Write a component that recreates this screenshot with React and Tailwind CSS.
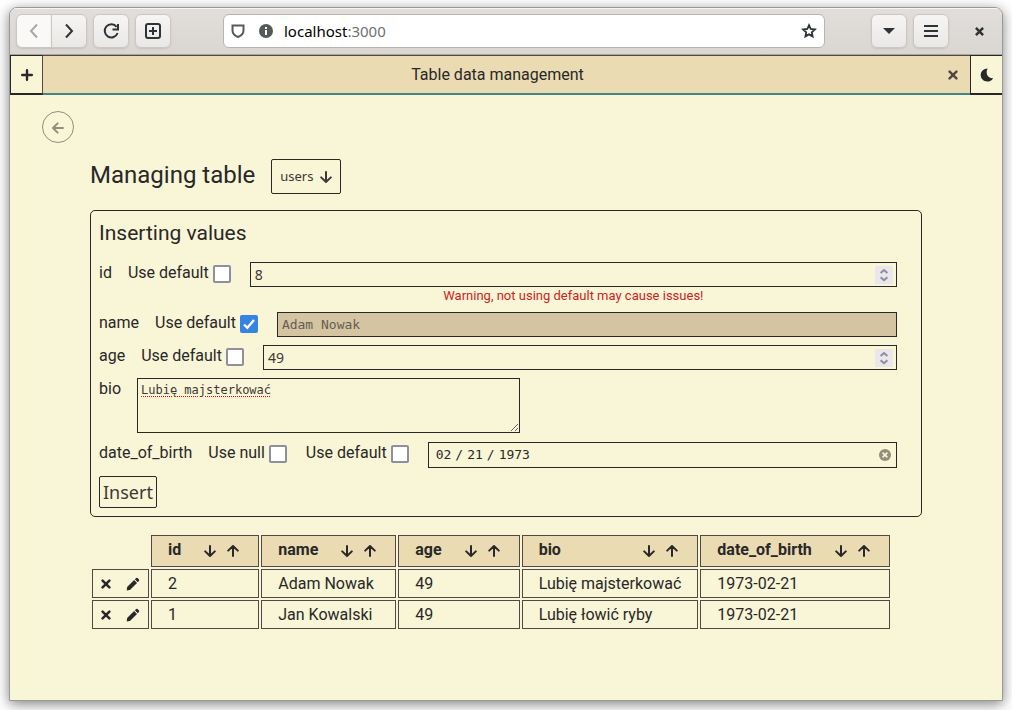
import React, { useState } from "react";

function Icon({ size = 16, box = 16, className = "", children }) {
  return (
    <svg
      width={size}
      height={size}
      viewBox={`0 0 ${box} ${box}`}
      fill="none"
      stroke="currentColor"
      strokeWidth="2"
      strokeLinecap="round"
      strokeLinejoin="round"
      aria-hidden="true"
      className={`block shrink-0 ${className}`}
    >
      {children}
    </svg>
  );
}

const ArrowDown = () => (
  <Icon size={12} box={12}>
    <path d="M6 1V11M1.2 6.4L6 11L10.8 6.4" />
  </Icon>
);

const ArrowUp = () => (
  <Icon size={12} box={12}>
    <path d="M6 11V1M1.2 5.6L6 1L10.8 5.6" />
  </Icon>
);

const Cross = () => (
  <Icon size={10} box={10}>
    <path strokeWidth="2.5" d="M1.6 1.6L8.4 8.4M8.4 1.6L1.6 8.4" />
  </Icon>
);

const Pencil = () => (
  <Icon size={14} box={15}>
    <path
      fill="currentColor"
      stroke="none"
      d="M.8 14.4L1.1 11.4Q1.2 10.7 1.7 10.2L8.7 3.2L11.8 6.3L4.8 13.3Q4.3 13.8 3.6 13.9L.8 14.4ZM9.5 2.4L10.8 1.2Q11.6 .4 12.4 1.1L13.9 2.6Q14.6 3.4 13.8 4.2L12.6 5.5Z"
    />
  </Icon>
);

function ToolbarButton({ label, className = "rounded-md", children }) {
  return (
    <button
      type="button"
      aria-label={label}
      className={`flex h-[34px] w-9 items-center justify-center border border-[#cdc7c2] bg-linear-to-b from-[#f6f5f4] to-[#eae8e6] text-[#2e3436] shadow-[0_1px_2px_rgba(0,0,0,0.1)] ${className}`}
    >
      {children}
    </button>
  );
}

function BrowserToolbar() {
  return (
    <header className="flex h-[47px] items-center border-b border-[#aaa49f] bg-linear-to-b from-[#e1dedb] to-[#dad6d2] pr-[9px] pl-1.5 shadow-[inset_0_1px_0_#f7f6f5]">
      <div className="flex gap-1.5">
        <div className="flex">
          <ToolbarButton label="Back" className="rounded-l-md bg-none bg-[#faf9f8] text-[#a5a9a9]">
            <Icon><path d="M11 1.5L5 8L11 14.5" strokeLinecap="butt" strokeLinejoin="miter" /></Icon>
          </ToolbarButton>
          <ToolbarButton label="Forward" className="-ml-px rounded-r-md">
            <Icon><path d="M5 1.5L11 8L5 14.5" strokeLinecap="butt" strokeLinejoin="miter" /></Icon>
          </ToolbarButton>
        </div>
        <ToolbarButton label="Reload">
          <Icon size={18} box={18}>
            <path d="M14.6 4.8A6.6 6.6 0 1 0 15.6 11" strokeLinecap="butt" />
            <path d="M16 2V7.5H10.5" strokeLinecap="butt" strokeLinejoin="miter" />
          </Icon>
        </ToolbarButton>
        <ToolbarButton label="New tab">
          <Icon>
            <rect x="1" y="1" width="14" height="14" rx="2" />
            <path d="M8 4V12M4 8H12" strokeLinecap="butt" />
          </Icon>
        </ToolbarButton>
      </div>
      <div className="mr-[46px] ml-[52px] flex h-[34px] min-w-0 flex-1 items-center rounded-md border border-[#b9b4af] bg-white px-[7px] text-[#555a5b]">
        <Icon size={14} box={14}>
          <path d="M1.5 1.5H12.5V6.5C12.5 10 10 11.8 7 13C4 11.8 1.5 10 1.5 6.5Z" strokeLinejoin="miter" />
        </Icon>
        <svg width="14" height="14" viewBox="0 0 14 14" className="ml-3.5 block shrink-0" aria-hidden="true">
          <circle cx="7" cy="7" r="7" fill="#555a5b" />
          <path d="M6 6H8V11H6ZM6 3H8V5H6Z" fill="#fff" />
        </svg>
        <p className="ml-[11px] flex-1 font-['Noto_Sans',sans-serif] text-[15px] leading-5 text-black">
          localhost<span className="text-[#6f6f6f]">:3000</span>
        </p>
        <button type="button" aria-label="Bookmark" className="text-[#2e3436]">
          <Icon>
            <path
              strokeLinejoin="miter"
              strokeWidth="1.8"
              d="M8 2.2L9.7 6L13.9 6.5L10.8 9.3L11.6 13.4L8 11.4L4.4 13.4L5.2 9.3L2.1 6.5L6.3 6Z"
            />
          </Icon>
        </button>
      </div>
      <div className="flex gap-1.5">
        <ToolbarButton label="List tabs">
          <Icon><path d="M2 5H14L8 11Z" fill="currentColor" stroke="none" /></Icon>
        </ToolbarButton>
        <ToolbarButton label="Menu">
          <Icon><path d="M1 3H15M1 8H15M1 13H15" strokeLinecap="butt" /></Icon>
        </ToolbarButton>
      </div>
      <button type="button" aria-label="Close window" className="ml-4 flex h-7 w-7 items-center justify-center text-[#2e3436]">
        <Icon size={9} box={8}>
          <path d="M.8 .8L7.2 7.2M7.2 .8L.8 7.2" strokeWidth="2.2" strokeLinecap="butt" />
        </Icon>
      </button>
    </header>
  );
}

function TabBar() {
  return (
    <nav className="flex h-10">
      <button
        type="button"
        aria-label="Add tab"
        className="flex w-[33px] items-center justify-center border border-b-2 border-[#282828] border-r-[#504945]"
      >
        <Icon size={12} box={12}><path d="M6 1.2V10.8M1.2 6H10.8" strokeWidth="2.4" /></Icon>
      </button>
      <div className="flex flex-1 items-center border-t border-b-2 border-t-[#504945] border-b-[#458588] bg-[#ebdbb2] px-2">
        <h1 className="flex-1 text-center text-base">Table data management</h1>
        <button type="button" aria-label="Close tab" className="flex h-[18px] w-[18px] items-center justify-center text-[#504945]">
          <Cross />
        </button>
      </div>
      <button
        type="button"
        aria-label="Toggle dark mode"
        className="flex w-8 items-center justify-center border-t border-b-2 border-l border-[#282828]"
      >
        <svg width="14" height="14" viewBox="0 0 14 14" className="block" aria-hidden="true">
          <path d="M7.6 .5C5.2 5 7.4 10.6 13.2 10.2C11.9 12.4 9.7 13.6 7.3 13.6C3.6 13.6 .7 10.7 .7 7.1C.7 3.5 3.6 .5 7.6 .5Z" fill="#282828" />
        </svg>
      </button>
    </nav>
  );
}

function CheckField({ label, id, initial = false }) {
  const [checked, setChecked] = useState(initial);
  return (
    <label htmlFor={id} className="mr-[19px] flex shrink-0 items-center gap-1">
      <span className="leading-[21px]">{label}</span>
      <span className="mt-[3px] grid">
        <input
          id={id}
          type="checkbox"
          checked={checked}
          onChange={(e) => setChecked(e.target.checked)}
          className="peer col-start-1 row-start-1 h-[18px] w-[18px] appearance-none rounded-[2px] border-2 border-[#8f8f9d] bg-white checked:border-[#3584e4] checked:bg-[#3584e4]"
        />
        <svg viewBox="0 0 18 18" aria-hidden="true" className="pointer-events-none col-start-1 row-start-1 hidden h-[18px] w-[18px] peer-checked:block">
          <path d="M4 9.5L7.3 12.8L14 5" fill="none" stroke="#fff" strokeWidth="2.4" />
        </svg>
      </span>
    </label>
  );
}

function Spinner() {
  return (
    <button type="button" aria-label="Change value" className="mr-[3px] flex h-[18px] w-[18px] items-center justify-center bg-[#e9e7ec] text-[#8f8f9d]">
      <Icon size={18} box={18}>
        <path d="M5.6 7L9 4L12.4 7M5.6 11.2L9 14.2L12.4 11.2" strokeLinecap="butt" />
      </Icon>
    </button>
  );
}

function NumberBox({ id, value }) {
  return (
    <div className="flex h-[25px] items-center border border-[#282828]">
      <input
        id={id}
        type="number"
        defaultValue={value}
        className="min-w-0 flex-1 appearance-none px-1 font-['Noto_Sans',sans-serif] text-sm leading-5 text-[#3c3836] outline-none [-moz-appearance:textfield] [&::-webkit-inner-spin-button]:appearance-none"
      />
      <Spinner />
    </div>
  );
}

function FieldRow({ name, children }) {
  return (
    <div className="flex items-start pr-4">
      <label htmlFor={name} className="mr-4 shrink-0 leading-[21px]">{name}</label>
      {children}
    </div>
  );
}

function InsertForm() {
  return (
    <form className="mt-4 rounded-[5px] border border-[#282828] p-2" onSubmit={(e) => e.preventDefault()}>
      <h3 className="mb-3.5 text-[21px] leading-[29px]">Inserting values</h3>
      <div className="flex flex-col gap-2">
        <FieldRow name="id">
          <CheckField label="Use default" id="id-default" />
          <div className="min-w-0 flex-1">
            <NumberBox id="id" value={8} />
            <p className="text-center text-[13px] leading-[17px] text-[#cc241d]">
              Warning, not using default may cause issues!
            </p>
          </div>
        </FieldRow>
        <FieldRow name="name">
          <CheckField label="Use default" id="name-default" initial />
          <input
            id="name"
            type="text"
            disabled
            defaultValue="Adam Nowak"
            className="h-[25px] min-w-0 flex-1 border border-[#282828] bg-[#d5c4a1] px-1 font-['DejaVu_Sans_Mono',monospace] text-[13px] text-[#665c54]"
          />
        </FieldRow>
        <FieldRow name="age">
          <CheckField label="Use default" id="age-default" />
          <div className="min-w-0 flex-1">
            <NumberBox id="age" value={49} />
          </div>
        </FieldRow>
        <FieldRow name="bio">
          <textarea
            id="bio"
            spellCheck={false}
            defaultValue="Lubię majsterkować"
            className="mb-px block h-[55px] w-[383px] resize border border-[#282828] p-[3px] font-['DejaVu_Sans_Mono',monospace] text-xs leading-4 text-[#3c3836] underline decoration-[#f00000] decoration-dotted decoration-1 underline-offset-2"
          />
        </FieldRow>
        <FieldRow name="date_of_birth">
          <CheckField label="Use null" id="dob-null" />
          <CheckField label="Use default" id="dob-default" />
          <div className="flex h-[26px] min-w-0 flex-1 items-center border border-[#282828]">
            <input
              id="date_of_birth"
              type="date"
              defaultValue="1973-02-21"
              className="h-6 min-w-0 flex-1 appearance-none px-1.5 font-['DejaVu_Sans_Mono',monospace] text-[13px] outline-none [&::-webkit-calendar-picker-indicator]:hidden [&::-webkit-datetime-edit-text]:px-[3px]"
            />
            <button type="button" aria-label="Clear date" className="mr-[5px]">
              <svg width="12" height="12" viewBox="0 0 12 12" className="block" aria-hidden="true">
                <circle cx="6" cy="6" r="6" fill="#918f7c" />
                <path d="M3.6 3.6L8.4 8.4M8.4 3.6L3.6 8.4" stroke="#f9f5d7" strokeWidth="1.6" />
              </svg>
            </button>
          </div>
        </FieldRow>
        <button
          type="submit"
          className="h-8 self-start rounded-[2px] border border-[#282828] px-[3px] font-['Noto_Sans',sans-serif] text-lg leading-7 text-[#3c3836]"
        >
          Insert
        </button>
      </div>
    </form>
  );
}

const columns = ["id", "name", "age", "bio", "date_of_birth"];

const rows = [
  ["2", "Adam Nowak", "49", "Lubię majsterkować", "1973-02-21"],
  ["1", "Jan Kowalski", "49", "Lubię łowić ryby", "1973-02-21"],
];

function DataTable() {
  return (
    <table className="mt-4 border-separate border-spacing-[2px]">
      <thead>
        <tr>
          <td />
          {columns.map((column) => (
            <th key={column} scope="col" className="h-8 border border-[#504945] bg-[#ebdbb2] px-4 py-0 text-left font-bold">
              <div className="flex items-center justify-between">
                <span className="pb-[3px] leading-5">{column}</span>
                <span className="ml-5 flex gap-[5px]">
                  <button type="button" aria-label={`Sort ${column} descending`} className="flex w-[18px] justify-center">
                    <ArrowDown />
                  </button>
                  <button type="button" aria-label={`Sort ${column} ascending`} className="flex w-[18px] justify-center">
                    <ArrowUp />
                  </button>
                </span>
              </div>
            </th>
          ))}
        </tr>
      </thead>
      <tbody>
        {rows.map((row) => (
          <tr key={row[0]}>
            <td className="border border-[#504945] py-0 pr-1.5 pl-1">
              <div className="flex gap-[9px]">
                <button type="button" aria-label={`Delete row ${row[0]}`} className="flex h-[18px] w-[18px] items-center justify-center">
                  <Cross />
                </button>
                <button type="button" aria-label={`Edit row ${row[0]}`} className="flex h-[18px] w-[18px] items-center justify-center">
                  <Pencil />
                </button>
              </div>
            </td>
            {row.map((cell, i) => (
              <td key={columns[i]} className="h-[29px] border border-[#504945] px-4 py-0 leading-5">{cell}</td>
            ))}
          </tr>
        ))}
      </tbody>
    </table>
  );
}

export default function App() {
  return (
    <div className="flex min-h-screen flex-col bg-white px-[9px] pt-[7px] pb-[9px] font-[Roboto,sans-serif] text-[#282828]">
      <div className="flex flex-1 flex-col overflow-hidden rounded-t-lg border border-[#999] bg-[#f9f5d7] shadow-[0_3px_13px_rgba(0,0,0,0.5)]">
        <BrowserToolbar />
        <TabBar />
        <div className="px-8 pt-4">
          <a
            href="#back"
            aria-label="Go back"
            className="flex h-8 w-8 items-center justify-center rounded-full border border-[#918f7c] text-[#918f7c]"
          >
            <Icon size={12} box={12} className="mt-0.5">
              <path d="M11 6H1M5.6 1.4L1 6L5.6 10.6" />
            </Icon>
          </a>
        </div>
        <main className="px-20 pt-4">
          <div className="flex items-start gap-4">
            <h2 className="text-2xl leading-[33px]">Managing table</h2>
            <button
              type="button"
              className="flex h-[35px] items-center gap-[7px] rounded-[2px] border border-[#282828] px-2 font-['Noto_Sans',sans-serif] text-[13px] text-[#3c3836]"
            >
              users
              <ArrowDown />
            </button>
          </div>
          <InsertForm />
          <DataTable />
        </main>
      </div>
    </div>
  );
}
